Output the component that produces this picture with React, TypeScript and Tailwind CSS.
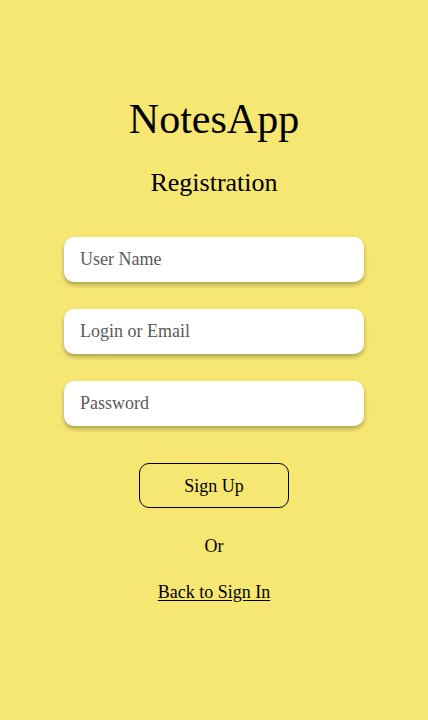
import React from "react";

export default function App() {
  const serif = { fontFamily: '"Liberation Serif", "DejaVu Serif", serif' };
  return (
    <div
      className="min-h-[720px] w-full bg-[#f6e672] flex flex-col items-center pt-[95px] text-black"
      style={serif}
    >
      <h1 className="text-[42px] leading-[48px] font-normal">NotesApp</h1>
      <h2 className="mt-[25px] text-[26px] leading-[30px] font-normal">Registration</h2>
      <div className="mt-[39px] flex flex-col gap-[27px] w-[300px]">
        {["User Name", "Login or Email", "Password"].map((p) => (
          <input
            key={p}
            type={p === "Password" ? "password" : "text"}
            placeholder={p}
            className="h-[45px] w-full rounded-[10px] bg-white px-4 text-[18px] text-black placeholder:text-[#5a5a5a] outline-none shadow-[0_3px_4px_rgba(0,0,0,0.28)]"
            style={serif}
          />
        ))}
      </div>
      <button
        className="mt-[37px] h-[45px] w-[150px] rounded-[10px] border border-black text-[18px] leading-none bg-transparent"
        style={serif}
      >
        Sign Up
      </button>
      <p className="mt-[26px] text-[18px] leading-[24px]">Or</p>
      <a href="#" className="mt-[22px] text-[18px] leading-[24px] underline underline-offset-2">
        Back to Sign In
      </a>
    </div>
  );
}
